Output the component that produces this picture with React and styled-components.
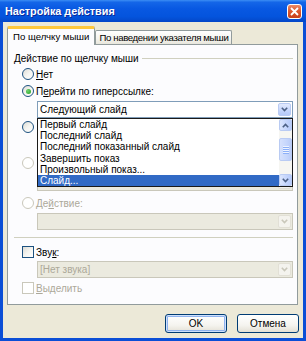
import React from 'react';
import styled, { createGlobalStyle, css } from 'styled-components';

const Global = createGlobalStyle`
  html, body { margin: 0; padding: 0; background: #fff; }
  body { font-family: "Liberation Sans", Arial, sans-serif; font-size: 10px; color: #000; }
  * { box-sizing: border-box; }
`;

const Window = styled.div`
  width: 306px;
  height: 341px;
  display: flex;
  flex-direction: column;
  background: #0B4ED6;
`;

const TitleBar = styled.div`
  height: 22px;
  flex: none;
  display: flex;
  align-items: center;
  justify-content: space-between;
  padding: 0 4px 0 5px;
  background: linear-gradient(to bottom, #3C8EF4 0%, #1466E8 10%, #0858E2 40%, #0454DD 75%, #0447C8 100%);
`;

const Title = styled.span`
  font-weight: bold;
  font-size: 10.8px;
  color: #fff;
  text-shadow: 1px 1px 0 #0A2A9A;
`;

const CloseButton = styled.div`
  width: 15px;
  height: 15px;
  border: 1px solid #fff;
  border-radius: 3px;
  background: linear-gradient(to bottom, #EC8B68 0%, #DD5A30 45%, #C7401A 100%);
  display: flex;
  align-items: center;
  justify-content: center;
  margin-top: 1px;
`;

const Body = styled.div`
  flex: 1;
  margin: 0 3px 3px;
  background: #ECE9D8;
  padding: 4px 5px 5px 4px;
  display: flex;
  flex-direction: column;
`;

const TabRow = styled.div`
  height: 18px;
  display: flex;
  align-items: flex-end;
  position: relative;
  z-index: 1;
  font-size: 9.6px;
`;

const Tab = styled.div`
  display: flex;
  align-items: center;
  border: 1px solid #919B9C;
  border-bottom: none;
  border-radius: 2px 2px 0 0;
  white-space: nowrap;
  ${(p) =>
    p.$active
      ? css`
          height: 19px;
          margin-bottom: -1px;
          padding: 0 5px 2px;
          background: #FCFCFE;
          border-top: 3px solid #FFC83C;
        `
      : css`
          height: 14px;
          padding: 0 3px;
          letter-spacing: -0.35px;
          background: linear-gradient(to bottom, #FFFFFF, #F4F3EE 60%, #E8E6DC);
        `}
`;

const Panel = styled.div`
  height: 261px;
  flex: none;
  background: #FCFCFE;
  border: 1px solid #919B9C;
  padding: 7px 4px 0 6px;
  display: flex;
  flex-direction: column;
`;

const GroupHeader = styled.div`
  height: 12px;
  display: flex;
  align-items: center;
  gap: 3px;
`;

const GroupLine = styled.div`
  flex: 1;
  height: 1px;
  background: #D0D0BF;
`;

const OptionRow = styled.div`
  height: 12px;
  display: flex;
  align-items: center;
  gap: 2px;
  margin-left: 8px;
  margin-top: ${(p) => p.$mt || 0}px;
  color: ${(p) => (p.$disabled ? '#ACA899' : '#000')};
  white-space: nowrap;
`;

const RadioCircle = styled.span`
  width: 12px;
  height: 12px;
  border-radius: 50%;
  flex: none;
  display: flex;
  align-items: center;
  justify-content: center;
  border: 1px solid ${(p) => (p.$disabled ? '#CAC8BB' : '#1C5180')};
  background: ${(p) =>
    p.$disabled ? '#FFFFFF' : 'linear-gradient(135deg, #DCDBD4 0%, #F4F4F0 50%, #FFFFFF 100%)'};
  &::after {
    content: '';
    display: ${(p) => (p.$checked ? 'block' : 'none')};
    width: 5px;
    height: 5px;
    border-radius: 50%;
    background: radial-gradient(circle at 35% 35%, #6FD26F, #21A121);
  }
`;

const CheckBox = styled.span`
  width: 12px;
  height: 12px;
  flex: none;
  border: 1px solid ${(p) => (p.$disabled ? '#CAC8BB' : '#1C5180')};
  background: ${(p) =>
    p.$disabled ? '#FFFFFF' : 'linear-gradient(135deg, #DCDBD4 0%, #F4F4F0 50%, #FFFFFF 100%)'};
`;

const U = styled.u`
  text-decoration: underline;
  text-underline-offset: 1px;
`;

const FieldWrap = styled.div`
  position: relative;
  margin-left: 23px;
  margin-top: ${(p) => p.$mt || 0}px;
  display: flex;
  gap: 5px;
`;

const Combo = styled.div`
  flex: 1;
  height: 17px;
  display: flex;
  align-items: center;
  justify-content: space-between;
  padding-left: 2px;
  border: 1px solid ${(p) => (p.$disabled ? '#C9C7BA' : '#7F9DB9')};
  background: ${(p) => (p.$disabled ? '#EBEADF' : '#FFFFFF')};
  color: ${(p) => (p.$disabled ? '#ACA899' : '#000')};
`;

const DropButton = styled.div`
  width: 13px;
  height: 13px;
  margin-right: 1px;
  border-radius: 2px;
  display: flex;
  align-items: center;
  justify-content: center;
  border: 1px solid ${(p) => (p.$disabled ? '#E2E0D6' : '#B9CBF3')};
  background: ${(p) =>
    p.$disabled ? '#F4F3EE' : 'linear-gradient(to bottom, #E2EAFE, #C4D5FC 60%, #B5C9F8)'};
`;

const BrowseButton = styled.div`
  width: 62px;
  height: 17px;
  border: 1px solid #C9C7BA;
  border-radius: 3px;
`;

const DropList = styled.div`
  position: absolute;
  top: 100%;
  left: 0;
  right: 0;
  height: 69px;
  border: 1px solid #1A1A1A;
  background: #FFFFFF;
  display: flex;
  z-index: 2;
`;

const Items = styled.div`
  flex: 1;
  display: flex;
  flex-direction: column;
`;

const Item = styled.div`
  height: 11.2px;
  line-height: 11px;
  padding-left: 2px;
  white-space: nowrap;
  background: ${(p) => (p.$selected ? '#316AC5' : 'transparent')};
  color: ${(p) => (p.$selected ? '#FFFFFF' : '#000')};
`;

const ScrollBar = styled.div`
  width: 13px;
  display: flex;
  flex-direction: column;
  background: #F6F6F2;
`;

const ScrollBtn = styled.div`
  height: 12px;
  border: 1px solid #B9CBF3;
  border-radius: 2px;
  background: linear-gradient(to right, #DCE6FD, #C4D5FC 60%, #B7CBF9);
  display: flex;
  align-items: center;
  justify-content: center;
`;

const Track = styled.div`
  flex: 1;
  padding: 7px 0 13px;
  display: flex;
`;

const Thumb = styled.div`
  flex: 1;
  border: 1px solid #B9CBF3;
  border-radius: 2px;
  background: linear-gradient(to right, #D6E1FD, #C6D6FC 60%, #BACCF8);
  display: flex;
  flex-direction: column;
  align-items: center;
  justify-content: center;
  gap: 1px;
`;

const Grip = styled.span`
  width: 6px;
  height: 1px;
  background: #EEF3FF;
  box-shadow: 0 1px 0 #8CB0F8;
`;

const Separator = styled.div`
  height: 1px;
  background: #D0D0BF;
  margin-top: 7px;
`;

const ButtonRow = styled.div`
  margin-top: 9px;
  height: 19px;
  display: flex;
  justify-content: flex-end;
  gap: 10px;
  margin-right: -1px;
`;

const Button = styled.div`
  width: 62px;
  height: 19px;
  border: 1px solid #003C74;
  border-radius: 3px;
  display: flex;
  align-items: center;
  justify-content: center;
  background: linear-gradient(to bottom, #FFFFFF 0%, #F5F4EF 60%, #E3E0D5 100%);
  box-shadow: ${(p) => (p.$default ? 'inset 0 0 0 1px #CEE0FC, inset 0 0 0 2px #8FB2EE' : 'none')};
`;

const Chevron = ({ color = '#4D6185', up = false }) => (
  <svg width="7" height="5" viewBox="0 0 7 5">
    <path
      d={up ? 'M0.8 4.2 L3.5 1.5 L6.2 4.2' : 'M0.8 0.8 L3.5 3.5 L6.2 0.8'}
      fill="none"
      stroke={color}
      strokeWidth="1.6"
    />
  </svg>
);

const CloseX = () => (
  <svg width="9" height="9" viewBox="0 0 9 9">
    <path d="M1 1 L8 8 M8 1 L1 8" stroke="#fff" strokeWidth="1.8" />
  </svg>
);

const items = [
  'Первый слайд',
  'Последний слайд',
  'Последний показанный слайд',
  'Завершить показ',
  'Произвольный показ...',
  'Слайд...',
];

export default function App() {
  return (
    <>
      <Global />
      <Window>
        <TitleBar>
          <Title>Настройка действия</Title>
          <CloseButton>
            <CloseX />
          </CloseButton>
        </TitleBar>
        <Body>
          <TabRow>
            <Tab $active>По щелчку мыши</Tab>
            <Tab>По наведении указателя мыши</Tab>
          </TabRow>
          <Panel>
            <GroupHeader>
              <span>Действие по щелчку мыши</span>
              <GroupLine />
            </GroupHeader>

            <OptionRow $mt={4}>
              <RadioCircle />
              <span><U>Н</U>ет</span>
            </OptionRow>
            <OptionRow $mt={5}>
              <RadioCircle $checked />
              <span>П<U>е</U>рейти по гиперссылке:</span>
            </OptionRow>
            <FieldWrap $mt={4}>
              <Combo>
                <span>Следующий слайд</span>
                <DropButton>
                  <Chevron />
                </DropButton>
              </Combo>
              <DropList>
                <Items>
                  {items.map((t, i) => (
                    <Item key={t} $selected={i === items.length - 1}>
                      {t}
                    </Item>
                  ))}
                </Items>
                <ScrollBar>
                  <ScrollBtn>
                    <Chevron up />
                  </ScrollBtn>
                  <Track>
                    <Thumb>
                      <Grip />
                      <Grip />
                      <Grip />
                      <Grip />
                    </Thumb>
                  </Track>
                  <ScrollBtn>
                    <Chevron />
                  </ScrollBtn>
                </ScrollBar>
              </DropList>
            </FieldWrap>

            {/* rows hidden behind the open drop-down list */}
            <OptionRow $mt={3}>
              <RadioCircle />
            </OptionRow>
            <FieldWrap $mt={4}>
              <Combo $disabled />
              <BrowseButton />
            </FieldWrap>
            <OptionRow $mt={3} $disabled>
              <RadioCircle $disabled />
            </OptionRow>
            <FieldWrap $mt={5}>
              <Combo $disabled>
                <span />
                <DropButton $disabled>
                  <Chevron color="#C9C7BA" />
                </DropButton>
              </Combo>
            </FieldWrap>

            <OptionRow $mt={6} $disabled>
              <RadioCircle $disabled />
              <span>Де<U>й</U>ствие:</span>
            </OptionRow>
            <FieldWrap $mt={4}>
              <Combo $disabled>
                <span />
                <DropButton $disabled>
                  <Chevron color="#C9C7BA" />
                </DropButton>
              </Combo>
            </FieldWrap>

            <Separator />

            <OptionRow $mt={8}>
              <CheckBox />
              <span>Зву<U>к</U>:</span>
            </OptionRow>
            <FieldWrap $mt={3}>
              <Combo $disabled>
                <span>[Нет звука]</span>
                <DropButton $disabled>
                  <Chevron color="#C9C7BA" />
                </DropButton>
              </Combo>
            </FieldWrap>
            <OptionRow $mt={4} $disabled>
              <CheckBox $disabled />
              <span><U>В</U>ыделить</span>
            </OptionRow>
          </Panel>
          <ButtonRow>
            <Button $default>OK</Button>
            <Button>Отмена</Button>
          </ButtonRow>
        </Body>
      </Window>
    </>
  );
}
